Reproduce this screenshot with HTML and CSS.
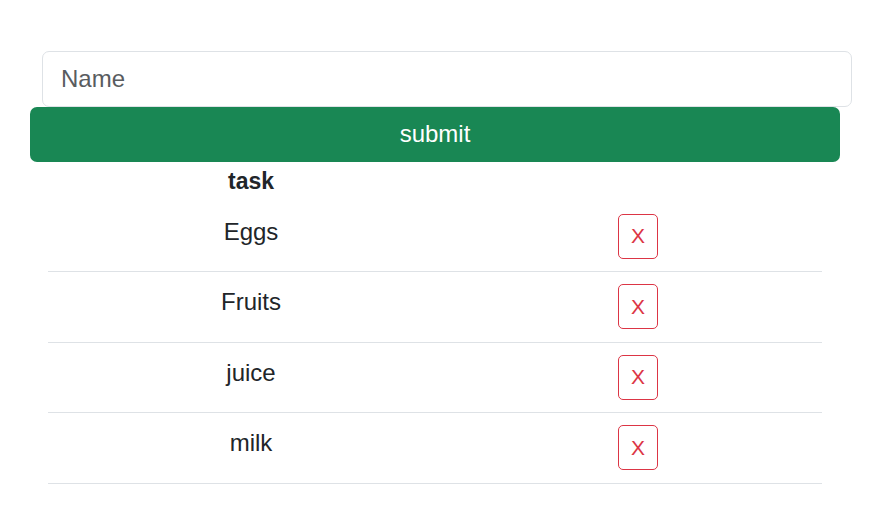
FILE: index.html
```html
<!DOCTYPE html>
<html>
<head>
<meta charset="utf-8">
<link rel="stylesheet" href="styles.css">
</head>
<body>
<main class="page">
  <input class="name-input" type="text" placeholder="Name">
  <button class="submit-btn">submit</button>
  <table class="task-table">
    <thead>
      <tr><th class="col-task">task</th><th class="col-action"></th></tr>
    </thead>
    <tbody>
      <tr><td class="cell-text">Eggs</td><td class="cell-btn"><button class="del-btn">X</button></td></tr>
      <tr><td class="cell-text">Fruits</td><td class="cell-btn"><button class="del-btn">X</button></td></tr>
      <tr><td class="cell-text">juice</td><td class="cell-btn"><button class="del-btn">X</button></td></tr>
      <tr><td class="cell-text">milk</td><td class="cell-btn"><button class="del-btn">X</button></td></tr>
    </tbody>
  </table>
</main>
</body>
</html>
```

FILE: styles.css
```css
* { box-sizing: border-box; }
html, body { margin: 0; background: #fff; }
body {
  font-family: "Liberation Sans", Arial, sans-serif;
  color: #212529;
  font-size: 24px;
}
.page {
  padding-top: 51px;
  display: flex;
  flex-direction: column;
  align-items: flex-start;
}
.name-input {
  margin-left: 42px;
  width: 810px;
  height: 55.5px;
  border: 1px solid #dee2e6;
  border-radius: 7px;
  padding: 0 18px;
  font-family: inherit;
  font-size: 24px;
  color: #212529;
  outline: none;
}
.name-input::placeholder { color: #595c5f; opacity: 1; }
.submit-btn {
  margin-left: 30px;
  width: 810px;
  height: 55.5px;
  border: none;
  border-radius: 7px;
  background: #198754;
  color: #fff;
  font-family: inherit;
  font-size: 24px;
}
.task-table {
  margin-left: 48px;
  width: 774px;
  border-collapse: collapse;
}
.col-task { width: 406px; }
.col-action { width: 368px; }
.task-table th {
  font-weight: bold;
  font-size: 23px;
  line-height: 31px;
  padding: 4px 9px 4.5px;
  text-align: center;
}
.task-table td {
  border-bottom: 1px solid #dee2e6;
  vertical-align: top;
  text-align: center;
}
.cell-text {
  padding: 12px 9px 0;
  line-height: 36px;
}
.cell-btn {
  padding: 12px 9px 12.5px;
}
.del-btn {
  display: block;
  margin: 0 auto;
  width: 40px;
  height: 45px;
  border: 1px solid #dc3545;
  border-radius: 5px;
  background: #fff;
  color: #dc3545;
  font-family: inherit;
  font-size: 21px;
  padding: 0;
}
```
